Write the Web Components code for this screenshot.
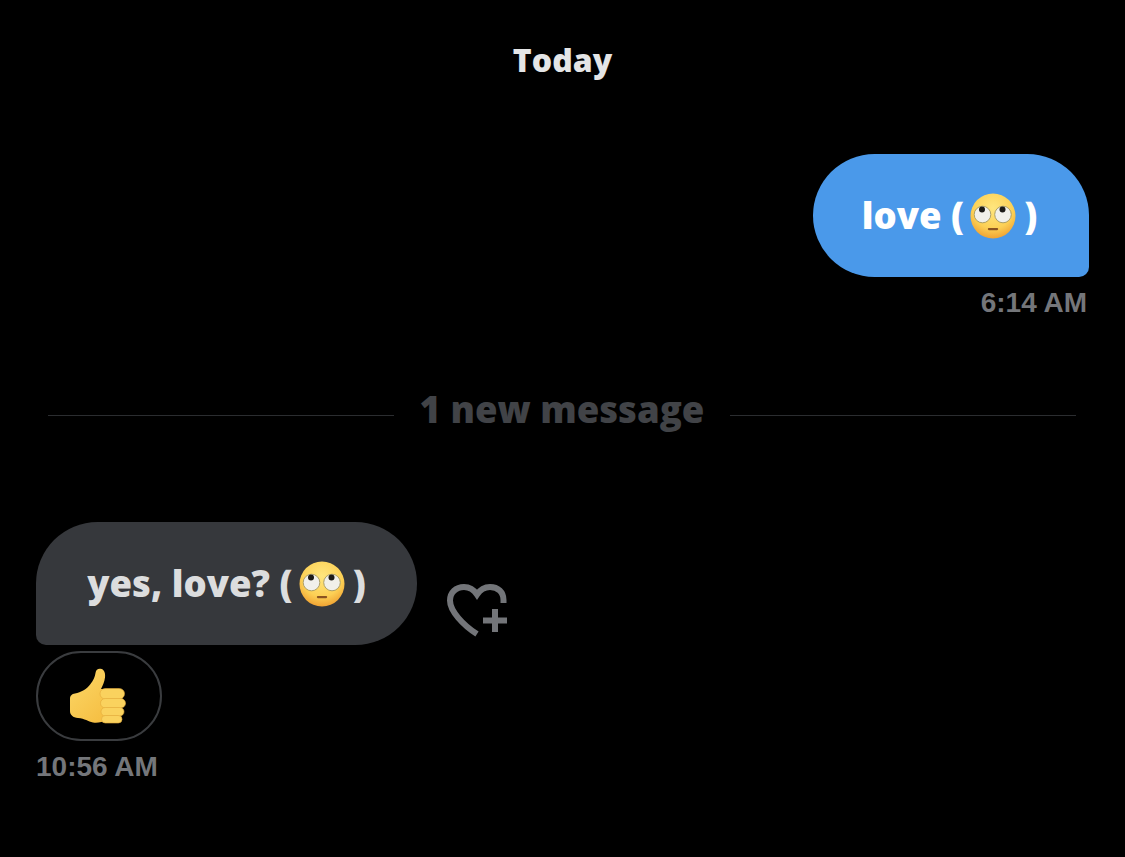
<!DOCTYPE html>
<html lang="en">
<head>
<meta charset="utf-8">
<title>Messages</title>
<style>
  html, body { margin: 0; background: #000; }
</style>
</head>
<body>
<dm-thread>
  <dm-day>Today</dm-day>
  <dm-message side="out" time="6:14 AM">love (<dm-eyeroll></dm-eyeroll>)</dm-message>
  <dm-divider>1 new message</dm-divider>
  <dm-message side="in" time="10:56 AM" reaction>yes, love? (<dm-eyeroll></dm-eyeroll>)</dm-message>
</dm-thread>

<script>
const BODY_FONT = "'Open Sans', 'Noto Sans', 'Liberation Sans', sans-serif";

class DmThread extends HTMLElement {
  constructor() {
    super();
    this.attachShadow({ mode: 'open' });
    this.shadowRoot.innerHTML = `
      <style>
        :host {
          display: flex;
          flex-direction: column;
          box-sizing: border-box;
          width: 1125px;
          height: 857px;
          padding: 38px 36px 0;
          background: #000;
          overflow: hidden;
          font-family: ${BODY_FONT};
        }
      </style>
      <slot></slot>
    `;
  }
}

class DmDay extends HTMLElement {
  constructor() {
    super();
    this.attachShadow({ mode: 'open' });
    this.shadowRoot.innerHTML = `
      <style>
        :host {
          display: block;
          height: 46px;
          margin-bottom: 70px;
          text-align: center;
          color: #e4e5e6;
          font-size: 32px;
          font-weight: 800;
          line-height: 44px;
        }
      </style>
      <slot></slot>
    `;
  }
}

class DmDivider extends HTMLElement {
  constructor() {
    super();
    this.attachShadow({ mode: 'open' });
    this.shadowRoot.innerHTML = `
      <style>
        :host {
          display: flex;
          align-items: center;
          gap: 26px;
          height: 50px;
          margin: 66px 13px 0 12px;
          color: #414347;
          font-size: 36.500px;
          font-weight: 800;
          line-height: 48px;
        }
        .line {
          flex: 1;
          height: 1px;
          margin-top: 12px;
          background: #2b2d30;
        }
      </style>
      <div class="line"></div>
      <span><slot></slot></span>
      <div class="line"></div>
    `;
  }
}

class DmEyeroll extends HTMLElement {
  constructor() {
    super();
    this.attachShadow({ mode: 'open' });
    this.shadowRoot.innerHTML = `
      <style>
        :host {
          display: inline-block;
          width: 46px;
          height: 46px;
          margin: 0 8px 0 6px;
          vertical-align: -10px;
        }
        svg { display: block; }
      </style>
      <svg width="46" height="46" viewBox="0 0 46 46" aria-hidden="true">
        <defs>
          <radialGradient id="face" cx="50%" cy="32%" r="70%">
            <stop offset="0" stop-color="#ffe67e"/>
            <stop offset="0.65" stop-color="#fcd055"/>
            <stop offset="1" stop-color="#ef9f30"/>
          </radialGradient>
        </defs>
        <circle cx="23" cy="23" r="22.500" fill="url(#face)"/>
        <circle cx="12.500" cy="21.500" r="8.300" fill="#f1f0ea" stroke="#a39763" stroke-width="0.9"/>
        <circle cx="33" cy="21.500" r="8.300" fill="#f1f0ea" stroke="#a39763" stroke-width="0.9"/>
        <circle cx="12" cy="16.600" r="3" fill="#1c1a17"/>
        <circle cx="32.500" cy="16.600" r="3" fill="#1c1a17"/>
        <rect x="17.800" y="35" width="10.400" height="2.200" rx="1.100" fill="#8a5320"/>
      </svg>
    `;
  }
}

class DmReaction extends HTMLElement {
  constructor() {
    super();
    this.attachShadow({ mode: 'open' });
    this.shadowRoot.innerHTML = `
      <style>
        :host {
          display: flex;
          align-items: center;
          justify-content: center;
          box-sizing: border-box;
          width: 126px;
          height: 90px;
          border: 2.500px solid #3a3c3f;
          border-radius: 45px;
        }
        svg { display: block; margin-top: 4px; }
      </style>
      <svg width="60" height="60" viewBox="0 0 60 60" aria-hidden="true">
        <defs>
          <linearGradient id="thumb" x1="0" y1="0" x2="0.7" y2="1">
            <stop offset="0" stop-color="#fcd868"/>
            <stop offset="1" stop-color="#f6c045"/>
          </linearGradient>
        </defs>
        <path fill="url(#thumb)" d="M1 31C1 27.500 3 26 6 25.500C12 24.500 18 21 21.500 16C24.500 12 26 9 26.500 5C27 1.500 29 .5 31.500 .8C35 1.300 36.500 4.500 36 9.500C35.500 14 33.500 18 32 21H38V53C33 53.500 29 55.500 24 54.500C19 53.500 16 50.500 9 50C4 49.600 1 47 1 43Z"/>
        <g fill="#fad25e">
          <rect x="31" y="20.500" width="24.500" height="10.500" rx="5.200" stroke="#e3a93a" stroke-width=".6"/>
          <rect x="31.500" y="30.500" width="25" height="9.500" rx="4.700" stroke="#e3a93a" stroke-width=".6"/>
          <rect x="32" y="39.500" width="23" height="8.500" rx="4.200" stroke="#e3a93a" stroke-width=".6"/>
          <rect x="32.500" y="47.500" width="20.500" height="7.500" rx="3.700" stroke="#e3a93a" stroke-width=".6"/>
        </g>
      </svg>
    `;
  }
}

class DmMessage extends HTMLElement {
  constructor() {
    super();
    this.attachShadow({ mode: 'open' });
  }

  connectedCallback() {
    const side = this.getAttribute('side') || 'in';
    const time = this.getAttribute('time') || '';
    const reaction = this.hasAttribute('reaction') ? '<dm-reaction></dm-reaction>' : '';
    const like = side === 'in' ? this.getLikeIcon() : '';

    this.shadowRoot.innerHTML = `
      <style>${this.getStyles()}</style>
      <div class="row">
        <div class="bubble"><span class="text"><slot></slot></span></div>
        ${like}
      </div>
      ${reaction}
      <div class="time">${time}</div>
    `;
  }

  getLikeIcon() {
    return `
      <svg class="like" width="62" height="54" viewBox="0 0 62 54" aria-hidden="true">
        <path fill="none" stroke="#737579" stroke-width="6" d="M56.500 20V17C56.500 9 51 4 43 4C37 4 33 7 30 11.500C27 7 22 4 17 4C9 4 3 9.500 3 17.500C3 28 16 42 30 51"/>
        <path fill="#737579" d="M45 26h6v8.500h9v6h-9V49h-6v-8.500h-9v-6h9z"/>
      </svg>
    `;
  }

  getStyles() {
    return `
      :host {
        display: flex;
        flex-direction: column;
        align-items: ${this.getAttribute('side') === 'out' ? 'flex-end' : 'flex-start'};
      }
      :host([side="in"]) { margin-top: 88px; }

      .row {
        display: flex;
        align-items: flex-start;
        gap: 30px;
      }

      .bubble {
        box-sizing: border-box;
        display: flex;
        align-items: center;
        justify-content: center;
        height: 123px;
        padding-bottom: 2px;
        font-size: 36.500px;
        font-weight: 800;
      }
      .text {
        display: block;
        white-space: nowrap;
        line-height: 50px;
      }
      :host([side="out"]) .bubble {
        width: 276px;
        padding-right: 3px;
        background: #4a99ea;
        color: #fff;
        border-radius: 62px 62px 10px 62px;
      }
      :host([side="in"]) .bubble {
        width: 381px;
        background: #36383c;
        color: #dcddde;
        border-radius: 62px 62px 62px 10px;
      }

      .like { margin-top: 61px; }

      dm-reaction { margin-top: 6px; }

      .time {
        color: #74767a;
        font-family: 'Liberation Sans', Arial, sans-serif;
        font-size: 28px;
        font-weight: 700;
        line-height: 30px;
        margin-top: 11px;
      }
      :host([side="out"]) .time { margin-right: 2px; }
    `;
  }
}

customElements.define('dm-thread', DmThread);
customElements.define('dm-day', DmDay);
customElements.define('dm-divider', DmDivider);
customElements.define('dm-eyeroll', DmEyeroll);
customElements.define('dm-reaction', DmReaction);
customElements.define('dm-message', DmMessage);
</script>
</body>
</html>
